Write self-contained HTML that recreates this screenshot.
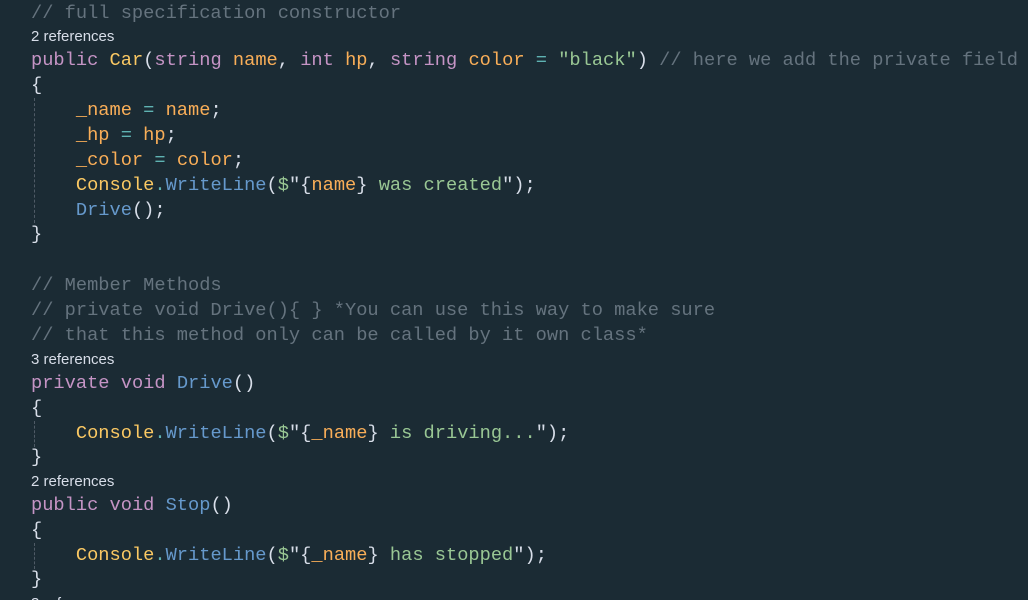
<!DOCTYPE html>
<html><head><meta charset="utf-8"><style>
html,body{margin:0;width:1028px;height:600px;overflow:hidden}
body{background:#1b2b34;position:relative}
.l{position:absolute;left:31px;white-space:pre;font-family:"Liberation Mono",monospace;font-size:18.7px;line-height:25px;color:#d8dee9}
.r{position:absolute;left:31px;font-family:"Liberation Sans",sans-serif;font-size:15px;line-height:20px;color:#d8dee9}
.c{color:#65737e}.k{color:#c594c5}.y{color:#fac863}.o{color:#f9ae58}.s{color:#99c794}.m{color:#6699cc}.e{color:#5fb3b3}
.g{position:absolute;left:34px;width:0;border-left:1px dashed #4f5b66}
</style></head><body>
<div class="g" style="top:98px;height:125px"></div>
<div class="g" style="top:421px;height:26px"></div>
<div class="g" style="top:543px;height:26px"></div>
<div class="l c" style="top:1px">// full specification constructor</div>
<div class="r" style="top:27px">2 references</div>
<div class="l" style="top:48px"><span class="k">public</span> <span class="y">Car</span>(<span class="k">string</span> <span class="o">name</span>, <span class="k">int</span> <span class="o">hp</span>, <span class="k">string</span> <span class="o">color</span> <span class="e">=</span> <span class="s">"black"</span>) <span class="c">// here we add the private field</span></div>
<div class="l" style="top:73px">{</div>
<div class="l" style="top:98px">    <span class="o">_name</span> <span class="e">=</span> <span class="o">name</span>;</div>
<div class="l" style="top:123px">    <span class="o">_hp</span> <span class="e">=</span> <span class="o">hp</span>;</div>
<div class="l" style="top:148px">    <span class="o">_color</span> <span class="e">=</span> <span class="o">color</span>;</div>
<div class="l" style="top:173px">    <span class="y">Console</span><span class="e">.</span><span class="m">WriteLine</span>(<span class="s">$</span>"{<span class="o">name</span>}<span class="s"> was created</span>");</div>
<div class="l" style="top:198px">    <span class="m">Drive</span>();</div>
<div class="l" style="top:222px">}</div>
<div class="l c" style="top:273px">// Member Methods</div>
<div class="l c" style="top:298px">// private void Drive(){ } *You can use this way to make sure</div>
<div class="l c" style="top:323px">// that this method only can be called by it own class*</div>
<div class="r" style="top:350px">3 references</div>
<div class="l" style="top:371px"><span class="k">private</span> <span class="k">void</span> <span class="m">Drive</span>()</div>
<div class="l" style="top:396px">{</div>
<div class="l" style="top:421px">    <span class="y">Console</span><span class="e">.</span><span class="m">WriteLine</span>(<span class="s">$</span>"{<span class="o">_name</span>}<span class="s"> is driving...</span>");</div>
<div class="l" style="top:445px">}</div>
<div class="r" style="top:472px">2 references</div>
<div class="l" style="top:493px"><span class="k">public</span> <span class="k">void</span> <span class="m">Stop</span>()</div>
<div class="l" style="top:518px">{</div>
<div class="l" style="top:543px">    <span class="y">Console</span><span class="e">.</span><span class="m">WriteLine</span>(<span class="s">$</span>"{<span class="o">_name</span>}<span class="s"> has stopped</span>");</div>
<div class="l" style="top:567px">}</div>
<div class="r" style="top:594px">3 references</div>
</body></html>
